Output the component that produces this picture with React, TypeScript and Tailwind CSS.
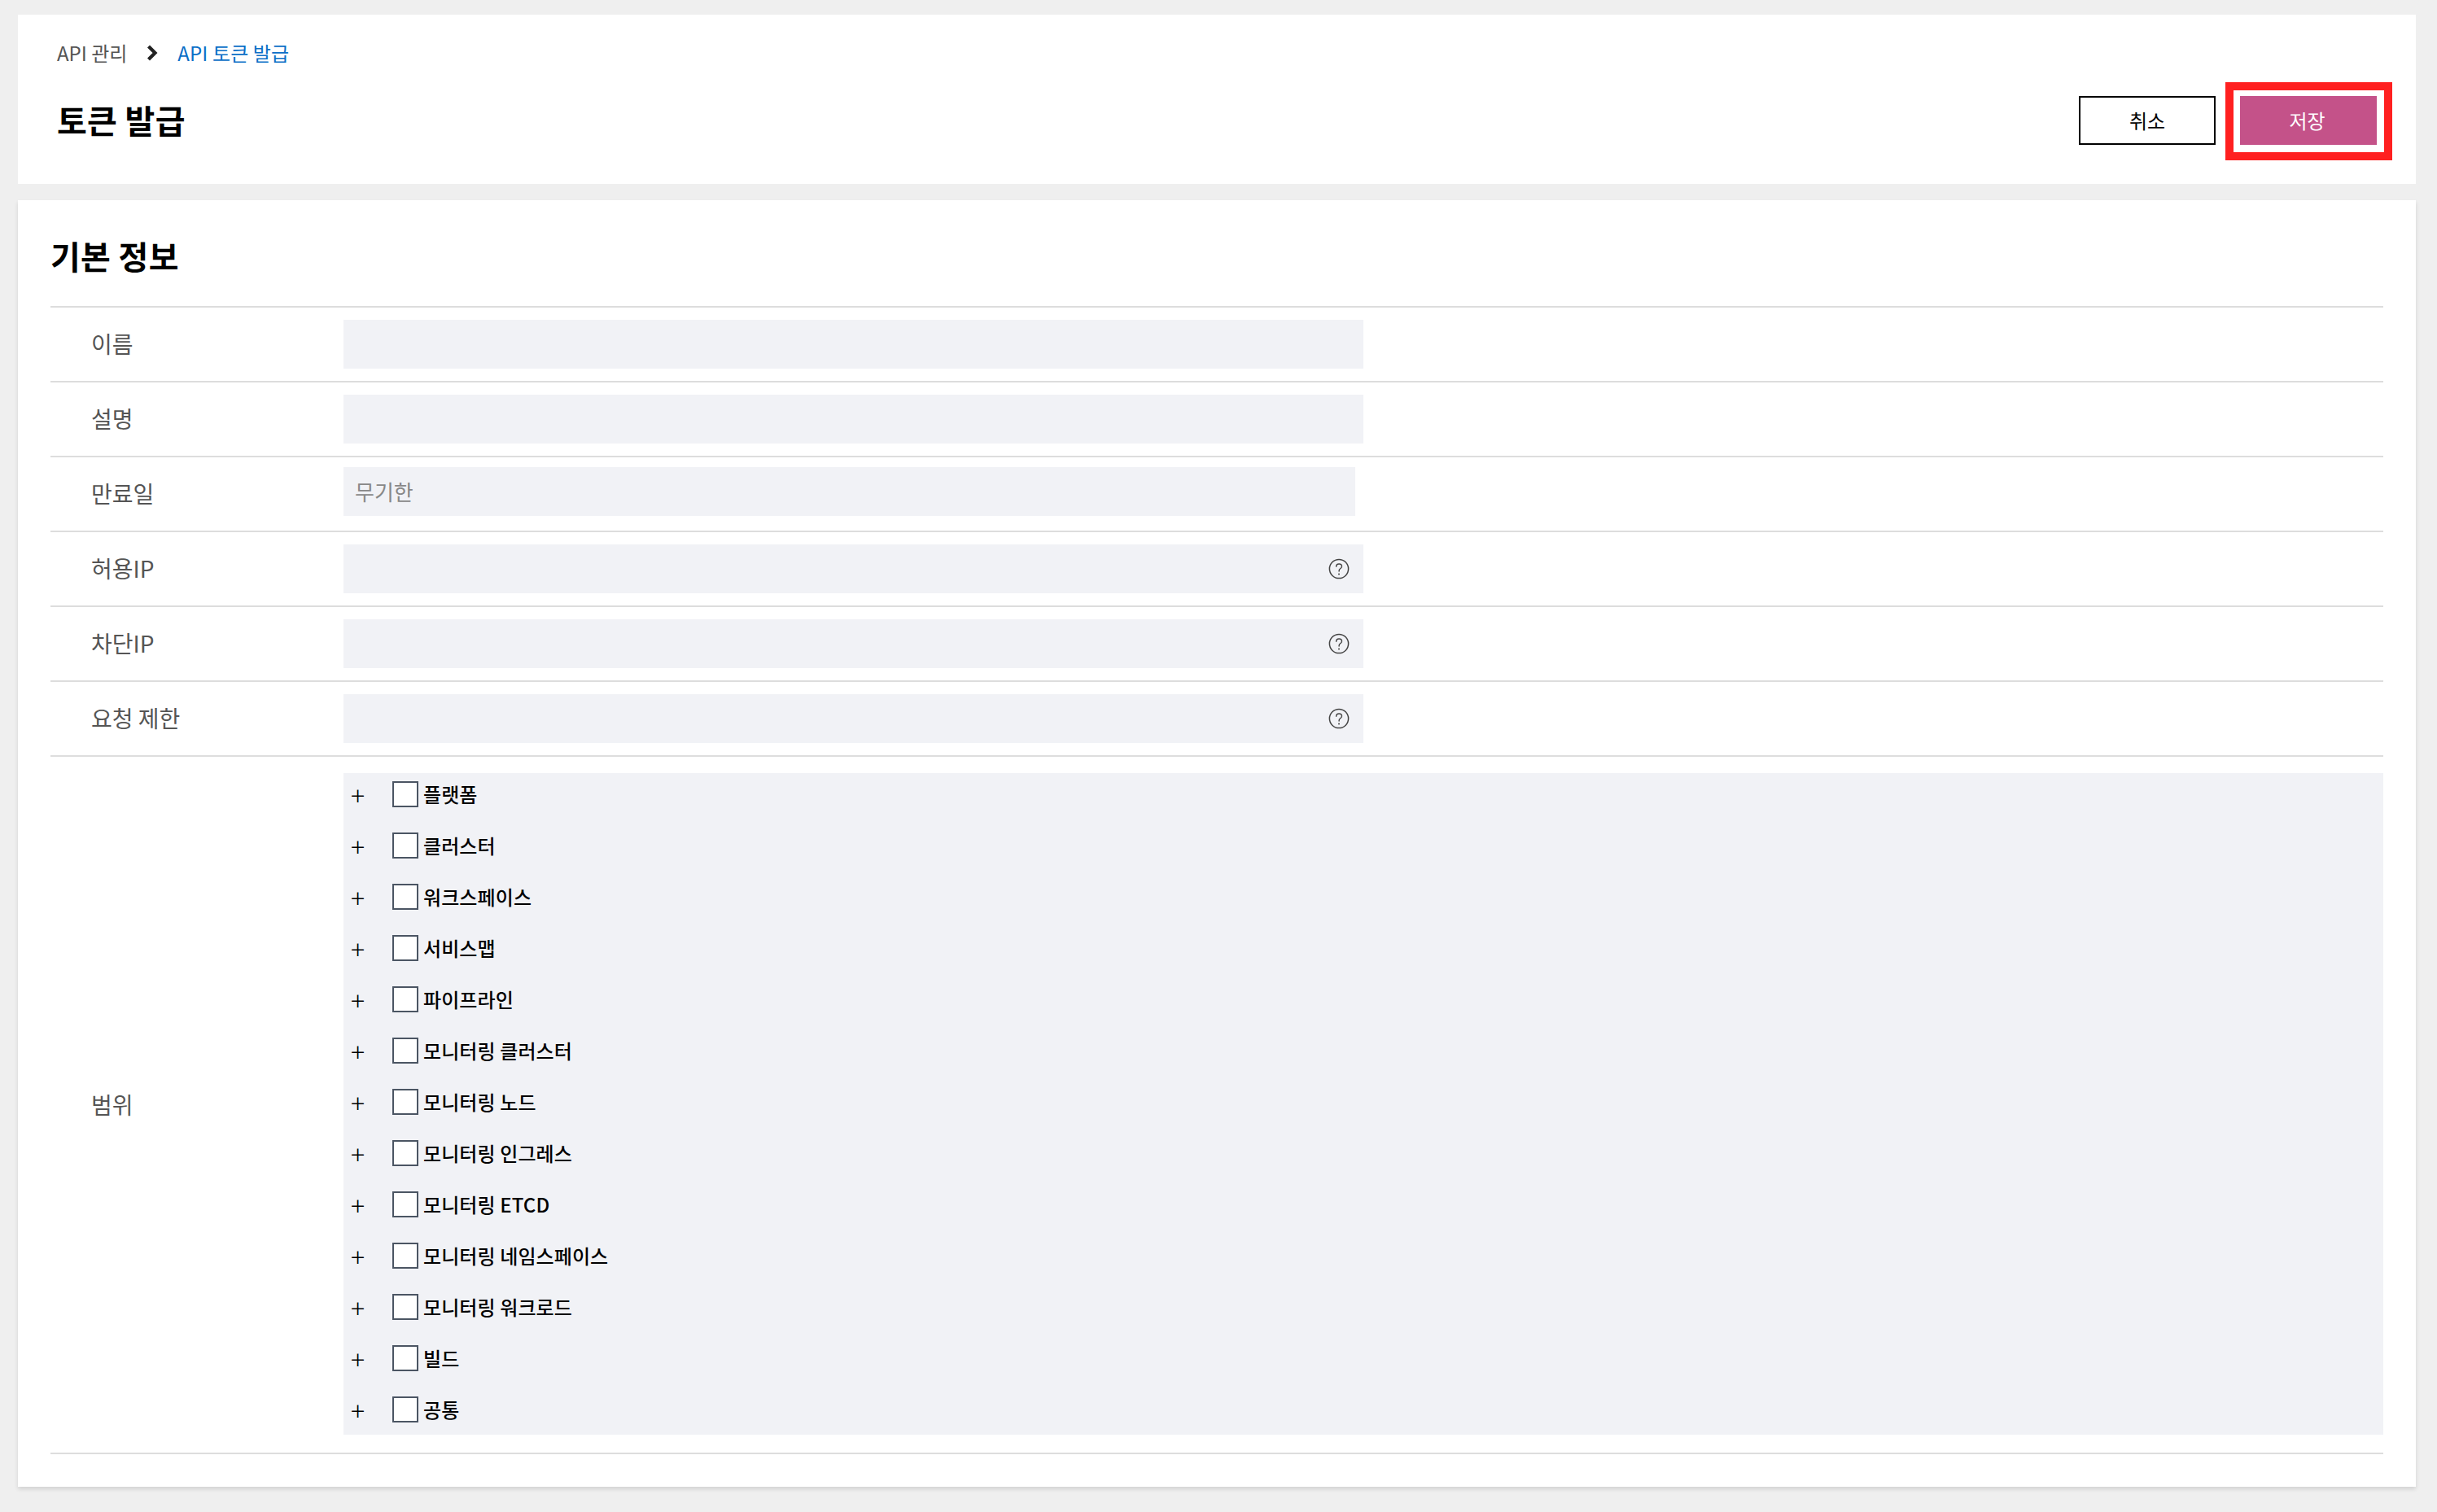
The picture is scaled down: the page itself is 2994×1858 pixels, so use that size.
import React from "react";

const scopes = ["플랫폼","클러스터","워크스페이스","서비스맵","파이프라인","모니터링 클러스터","모니터링 노드","모니터링 인그레스","모니터링 ETCD","모니터링 네임스페이스","모니터링 워크로드","빌드","공통"];

function Help() {
  return (
    <svg width="26" height="26" viewBox="0 0 26 26" fill="none" className="absolute right-[17px] top-[17px]">
      <circle cx="13" cy="13" r="11.6" stroke="#444" strokeWidth="1.5" />
      <path d="M9.6 10.2c0-1.9 1.5-3.2 3.5-3.2s3.4 1.2 3.4 2.9c0 1.5-.9 2.2-1.9 2.9-1 .7-1.5 1.3-1.5 2.6v.6" stroke="#444" strokeWidth="1.4" strokeLinecap="round" />
      <circle cx="13" cy="19.4" r="1" fill="#444" />
    </svg>
  );
}

function Row({ label, help, children }: { label: string; help?: boolean; children?: React.ReactNode }) {
  return (
    <div className="flex h-[92px] items-center border-b-2 border-[#dddddd]">
      <div className="mb-[2px] w-[360px] pl-[50px] text-[28px] text-[#555555]">{label}</div>
      {children ?? (
        <div className="relative h-[60px] w-[1253px] bg-[#f1f2f6]">{help && <Help />}</div>
      )}
    </div>
  );
}

export default function App() {
  return (
    <div className="relative flex min-h-[1858px] w-[2994px] flex-col gap-[20px] bg-[#efefef] pl-[22px] pr-[26px] pt-[18px] font-['Noto_Sans_CJK_KR',sans-serif]">
      <header className="flex h-[208px] items-start justify-between bg-white pl-[48px] pr-[48px]">
        <div>
          <nav className="mt-[29px] flex h-[36px] items-center text-[24px] leading-[36px]">
            <span className="text-[#555555]">API 관리</span>
            <svg width="14" height="20" viewBox="0 0 14 20" fill="none" className="ml-[24px] mr-[24px]">
              <path d="M2.5 2 10.5 10 2.5 18" stroke="#222" strokeWidth="4.2" />
            </svg>
            <span className="tracking-[0.1px] text-[#0b6fc7]">API 토큰 발급</span>
          </nav>
          <h1 className="mt-[34px] text-[40px] font-bold leading-[60px] tracking-[0.3px] text-black">토큰 발급</h1>
        </div>
        <div className="relative mt-[100px] flex gap-[30px]">
          <button className="h-[60px] w-[168px] border-2 border-black bg-white text-[24px] text-black">취소</button>
          <button className="h-[60px] w-[168px] bg-[#c45289] pr-[3px] text-[24px] text-white">저장</button>
          <div className="absolute left-[180px] top-[-17px] h-[96px] w-[205px] border-[10px] border-[#ff2020]" />
        </div>
      </header>
      <main className="bg-white px-[40px] pb-[40px] shadow-[0_3px_5px_rgba(0,0,0,0.12)]">
        <h2 className="flex h-[130px] items-center pt-[5px] text-[40px] font-bold tracking-[0.3px] text-black">기본 정보</h2>
        <div className="border-t-2 border-[#dddddd]">
          <Row label="이름" />
          <Row label="설명" />
          <Row label="만료일">
            <div className="mb-[6px] flex h-[60px] w-[1243px] items-center bg-[#f1f2f6] pb-[2px] pl-[14px] text-[26px] text-[#888888]">무기한</div>
          </Row>
          <Row label="허용IP" help />
          <Row label="차단IP" help />
          <Row label="요청 제한" help />
          <div className="flex items-center border-b-2 border-[#dddddd] pb-[22px] pt-[20px]">
            <div className="w-[360px] pl-[50px] text-[28px] text-[#555555]">범위</div>
            <div className="flex flex-1 flex-col gap-[31px] bg-[#f1f2f6] pb-[15px] pl-[9px] pt-[10px]">
              {scopes.map((s) => (
                <div key={s} className="flex h-[32px] items-center">
                  <span className="w-[51px] text-[32px] font-light leading-[32px] text-black">+</span>
                  <span className="h-[32px] w-[32px] border-2 border-[#4b5563] bg-white" />
                  <span className="ml-[6px] text-[24px] font-medium leading-[32px] tracking-[0.1px] text-black">{s}</span>
                </div>
              ))}
            </div>
          </div>
        </div>
      </main>
    </div>
  );
}
